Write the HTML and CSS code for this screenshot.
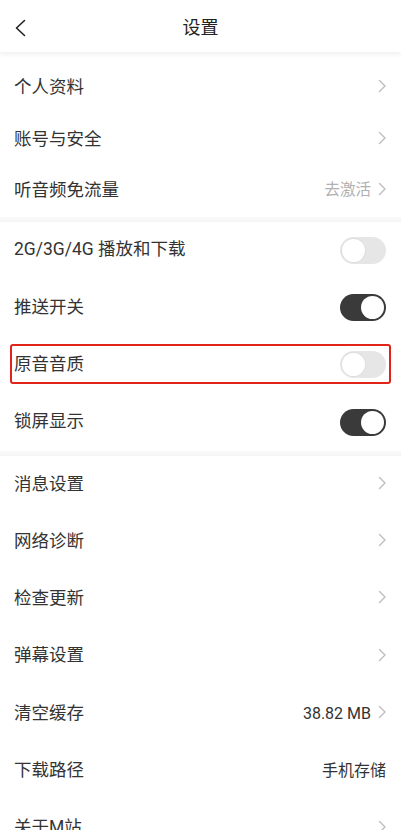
FILE: index.html
```html
<!DOCTYPE html>
<html lang="zh-CN">
<head>
<meta charset="utf-8">
<title>设置</title>
<link rel="stylesheet" href="styles.css">
</head>
<body>
<header class="topbar">
  <svg class="back" width="14" height="18" viewBox="0 0 14 18"><path d="M11.5 1.5 L3.5 9 L11.5 16.5" fill="none" stroke="#222" stroke-width="1.6" stroke-linecap="round" stroke-linejoin="round"/></svg>
  <h1 class="title">设置</h1>
</header>

<section class="group group-first">
  <div class="row short"><span class="label">个人资料</span><span class="right"><svg class="chev" width="9" height="14" viewBox="0 0 9 14"><path d="M1.5 1.5 L7 7 L1.5 12.5" fill="none" stroke="#bdbdbd" stroke-width="1.4" stroke-linecap="round" stroke-linejoin="round"/></svg></span></div>
  <div class="row short"><span class="label">账号与安全</span><span class="right"><svg class="chev" width="9" height="14" viewBox="0 0 9 14"><path d="M1.5 1.5 L7 7 L1.5 12.5" fill="none" stroke="#bdbdbd" stroke-width="1.4" stroke-linecap="round" stroke-linejoin="round"/></svg></span></div>
  <div class="row short"><span class="label">听音频免流量</span><span class="right"><span class="value muted">去激活</span><svg class="chev" width="9" height="14" viewBox="0 0 9 14"><path d="M1.5 1.5 L7 7 L1.5 12.5" fill="none" stroke="#bdbdbd" stroke-width="1.4" stroke-linecap="round" stroke-linejoin="round"/></svg></span></div>
</section>

<div class="divider"></div>

<section class="group">
  <div class="row"><span class="label">2G/3G/4G 播放和下载</span><span class="toggle off"><span class="knob"></span></span></div>
  <div class="row"><span class="label">推送开关</span><span class="toggle on"><span class="knob"></span></span></div>
  <div class="row highlighted"><span class="label">原音音质</span><span class="toggle off"><span class="knob"></span></span><span class="mark"></span></div>
  <div class="row"><span class="label">锁屏显示</span><span class="toggle on"><span class="knob"></span></span></div>
</section>

<div class="divider"></div>

<section class="group">
  <div class="row"><span class="label">消息设置</span><span class="right"><svg class="chev" width="9" height="14" viewBox="0 0 9 14"><path d="M1.5 1.5 L7 7 L1.5 12.5" fill="none" stroke="#bdbdbd" stroke-width="1.4" stroke-linecap="round" stroke-linejoin="round"/></svg></span></div>
  <div class="row"><span class="label">网络诊断</span><span class="right"><svg class="chev" width="9" height="14" viewBox="0 0 9 14"><path d="M1.5 1.5 L7 7 L1.5 12.5" fill="none" stroke="#bdbdbd" stroke-width="1.4" stroke-linecap="round" stroke-linejoin="round"/></svg></span></div>
  <div class="row"><span class="label">检查更新</span><span class="right"><svg class="chev" width="9" height="14" viewBox="0 0 9 14"><path d="M1.5 1.5 L7 7 L1.5 12.5" fill="none" stroke="#bdbdbd" stroke-width="1.4" stroke-linecap="round" stroke-linejoin="round"/></svg></span></div>
  <div class="row"><span class="label">弹幕设置</span><span class="right"><svg class="chev" width="9" height="14" viewBox="0 0 9 14"><path d="M1.5 1.5 L7 7 L1.5 12.5" fill="none" stroke="#bdbdbd" stroke-width="1.4" stroke-linecap="round" stroke-linejoin="round"/></svg></span></div>
  <div class="row"><span class="label">清空缓存</span><span class="right"><span class="value">38.82 MB</span><svg class="chev" width="9" height="14" viewBox="0 0 9 14"><path d="M1.5 1.5 L7 7 L1.5 12.5" fill="none" stroke="#bdbdbd" stroke-width="1.4" stroke-linecap="round" stroke-linejoin="round"/></svg></span></div>
  <div class="row"><span class="label">下载路径</span><span class="right"><span class="value">手机存储</span></span></div>
  <div class="row"><span class="label">关于M站</span><span class="right"><svg class="chev" width="9" height="14" viewBox="0 0 9 14"><path d="M1.5 1.5 L7 7 L1.5 12.5" fill="none" stroke="#bdbdbd" stroke-width="1.4" stroke-linecap="round" stroke-linejoin="round"/></svg></span></div>
</section>
</body>
</html>
```

FILE: styles.css
```css
* { box-sizing: border-box; }

html, body {
  margin: 0;
  padding: 0;
  background: #ffffff;
  font-family: "Roboto", "Noto Sans CJK SC", "Noto Sans", sans-serif;
  color: #333333;
}

.topbar {
  position: relative;
  z-index: 2;
  height: 52px;
  display: flex;
  align-items: center;
  justify-content: center;
  background: #ffffff;
  box-shadow: 0 2px 5px rgba(0, 0, 0, 0.07);
}

.back {
  position: absolute;
  left: 13px;
  top: 19px;
}

.title {
  margin: 3px 0 0 0;
  font-size: 18px;
  font-weight: 400;
  color: #222222;
  line-height: 1;
}

.group {
  display: flex;
  flex-direction: column;
}

.group-first {
  padding-top: 10px;
}

.row {
  position: relative;
  height: 57.3px;
  display: flex;
  align-items: center;
  justify-content: space-between;
  padding: 0 15px 0 14px;
}

.row.short {
  height: 51.5px;
}

.label {
  font-size: 17.5px;
  line-height: 1;
  color: #333333;
  white-space: nowrap;
}

.right {
  display: flex;
  align-items: center;
  gap: 7px;
}

.value {
  font-size: 16px;
  line-height: 1;
  color: #333333;
}

.value.muted {
  color: #b0b0b0;
  font-size: 15.5px;
}

.chev {
  display: block;
  margin-right: -1px;
  margin-top: -3px;
}

.divider {
  height: 5px;
  background: linear-gradient(#fafafa, #f5f5f5);
}

.toggle {
  position: relative;
  width: 46px;
  height: 27px;
  border-radius: 14px;
  display: flex;
  align-items: center;
  padding: 2px;
}

.toggle.on {
  background: #3a3a3a;
  justify-content: flex-end;
}

.toggle.off {
  background: #e6e6e6;
  justify-content: flex-start;
}

.knob {
  width: 23px;
  height: 23px;
  border-radius: 50%;
  background: #ffffff;
}

.toggle.off .knob {
  box-shadow: 0 0 0 1px #dedede;
}

.mark {
  position: absolute;
  left: 10px;
  right: 10px;
  top: 8px;
  bottom: 9px;
  border: 2px solid #e2231a;
  border-radius: 3px;
  pointer-events: none;
}
```
